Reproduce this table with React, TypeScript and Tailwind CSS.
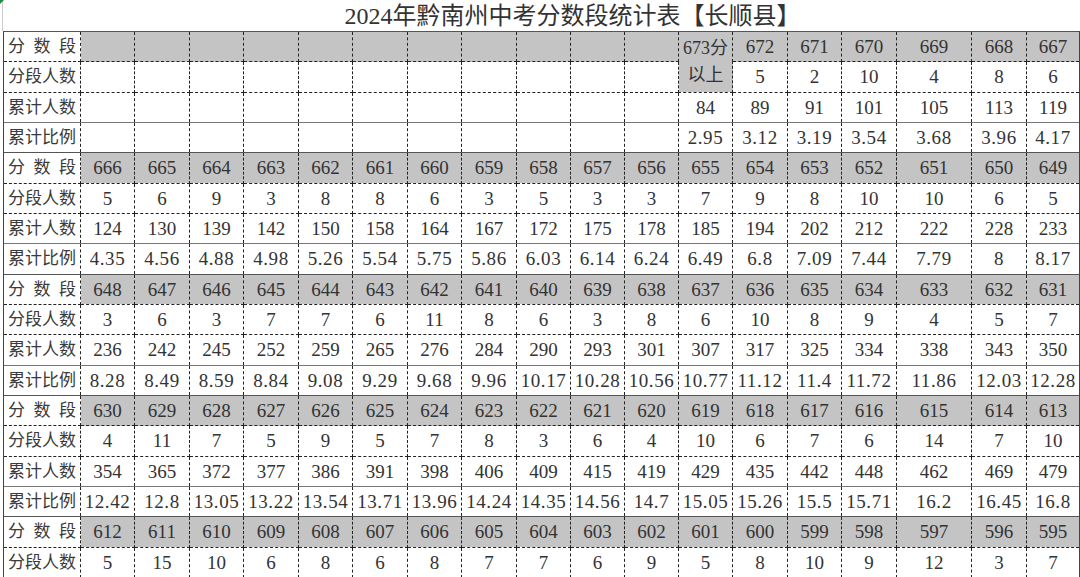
import React from 'react';

// one block = 分数段 / 分段人数 / 累计人数 / 累计比例
type Block = {
  scores: string[];
  counts: string[];
  totals?: string[];
  ratios?: string[];
};

const colWidths = [77, 54, 55, 54, 55, 54, 55, 54, 55, 54, 54, 54, 54, 55, 54, 55, 75, 55, 53];

const blocks: Block[] = [
  {
    scores: '666 665 664 663 662 661 660 659 658 657 656 655 654 653 652 651 650 649'.split(' '),
    counts: '5 6 9 3 8 8 6 3 5 3 3 7 9 8 10 10 6 5'.split(' '),
    totals: '124 130 139 142 150 158 164 167 172 175 178 185 194 202 212 222 228 233'.split(' '),
    ratios: '4.35 4.56 4.88 4.98 5.26 5.54 5.75 5.86 6.03 6.14 6.24 6.49 6.8 7.09 7.44 7.79 8 8.17'.split(' '),
  },
  {
    scores: '648 647 646 645 644 643 642 641 640 639 638 637 636 635 634 633 632 631'.split(' '),
    counts: '3 6 3 7 7 6 11 8 6 3 8 6 10 8 9 4 5 7'.split(' '),
    totals: '236 242 245 252 259 265 276 284 290 293 301 307 317 325 334 338 343 350'.split(' '),
    ratios: '8.28 8.49 8.59 8.84 9.08 9.29 9.68 9.96 10.17 10.28 10.56 10.77 11.12 11.4 11.72 11.86 12.03 12.28'.split(' '),
  },
  {
    scores: '630 629 628 627 626 625 624 623 622 621 620 619 618 617 616 615 614 613'.split(' '),
    counts: '4 11 7 5 9 5 7 8 3 6 4 10 6 7 6 14 7 10'.split(' '),
    totals: '354 365 372 377 386 391 398 406 409 415 419 429 435 442 448 462 469 479'.split(' '),
    ratios: '12.42 12.8 13.05 13.22 13.54 13.71 13.96 14.24 14.35 14.56 14.7 15.05 15.26 15.5 15.71 16.2 16.45 16.8'.split(' '),
  },
  {
    scores: '612 611 610 609 608 607 606 605 604 603 602 601 600 599 598 597 596 595'.split(' '),
    counts: '5 15 10 6 8 6 8 7 7 6 9 5 8 10 9 12 3 7'.split(' '),
  },
];

const empty11 = Array.from({ length: 11 }, () => '');

// border rules per row kind
const rowTop = {
  score: '[border-top-style:solid] border-t-[#555]',
  plain: '',
  ratio: '[border-top-style:solid] border-t-[#777] tracking-[0.6px]',
};

const cellBase = 'p-0 border border-dashed border-[#222] text-center align-middle';

function Label({ text, top }: { text: string; top: string }) {
  return (
    <td className={`${cellBase} ${top} tracking-normal bg-white [border-left-style:solid] border-l-[#444]`}>
      <div className="flex justify-between px-[4px] text-[17px] leading-none text-[#3a3a3a]">
        {text.split('').map((ch, i) => (
          <span key={i}>{ch}</span>
        ))}
      </div>
    </td>
  );
}

function Cells({ values, gray, top }: { values: string[]; gray?: boolean; top: string }) {
  return (
    <>
      {values.map((v, i) => (
        <td
          key={i}
          className={`${cellBase} ${top} ${gray ? 'bg-[#c4c4c4]' : 'bg-white'} ${
            i === values.length - 1 ? '[border-right-style:solid] border-r-[#444]' : ''
          }`}
        >
          {v}
        </td>
      ))}
    </>
  );
}

export default function App() {
  return (
    <div className="relative w-[1080px] h-[577px] overflow-hidden bg-white text-[#333] font-['Liberation_Serif','Noto_Sans_CJK_SC',serif]">
      {/* little green selection mark in the corner */}
      <div className="absolute left-0 top-0 w-0 h-0 border-t-[4px] border-r-[4px] border-t-[#1e8e3e] border-r-transparent" />

      <div className="ml-[2px] h-[31px] border-l border-[#ccc] flex items-center justify-center pl-[62px] text-[24px] leading-none">
        2024年黔南州中考分数段统计表【长顺县】
      </div>

      <table className="ml-[3px] table-fixed border-collapse text-[19px] leading-none">
        <colgroup>
          {colWidths.map((w, i) => (
            <col key={i} style={{ width: w }} />
          ))}
        </colgroup>
        <tbody>
          {/* first block: 673分以上 is merged over two rows */}
          <tr className="h-[30.33px]">
            <Label text="分数段" top={rowTop.score} />
            {empty11.map((_, i) => (
              <td key={i} className={`${cellBase} ${rowTop.score} bg-[#c4c4c4]`} />
            ))}
            <td rowSpan={2} className={`${cellBase} ${rowTop.score} bg-[#c4c4c4] text-[18px] leading-[27px]`}>
              673分
              <br />
              以上
            </td>
            <Cells values={['672', '671', '670', '669', '668', '667']} gray top={rowTop.score} />
          </tr>
          <tr className="h-[30.33px]">
            <Label text="分段人数" top={rowTop.plain} />
            {empty11.map((_, i) => (
              <td key={i} className={`${cellBase} bg-white`} />
            ))}
            <Cells values={['5', '2', '10', '4', '8', '6']} top={rowTop.plain} />
          </tr>
          <tr className="h-[30.33px]">
            <Label text="累计人数" top={rowTop.plain} />
            <Cells values={[...empty11, '84', '89', '91', '101', '105', '113', '119']} top={rowTop.plain} />
          </tr>
          <tr className="h-[30.33px]">
            <Label text="累计比例" top={rowTop.ratio} />
            <Cells
              values={[...empty11, '2.95', '3.12', '3.19', '3.54', '3.68', '3.96', '4.17']}
              top={rowTop.ratio}
            />
          </tr>

          {blocks.map((b, bi) => (
            <React.Fragment key={bi}>
              <tr className="h-[30.33px]">
                <Label text="分数段" top={rowTop.score} />
                <Cells values={b.scores} gray top={rowTop.score} />
              </tr>
              <tr className="h-[30.33px]">
                <Label text="分段人数" top={rowTop.plain} />
                <Cells values={b.counts} top={rowTop.plain} />
              </tr>
              {b.totals && (
                <tr className="h-[30.33px]">
                  <Label text="累计人数" top={rowTop.plain} />
                  <Cells values={b.totals} top={rowTop.plain} />
                </tr>
              )}
              {b.ratios && (
                <tr className="h-[30.33px]">
                  <Label text="累计比例" top={rowTop.ratio} />
                  <Cells values={b.ratios} top={rowTop.ratio} />
                </tr>
              )}
            </React.Fragment>
          ))}
        </tbody>
      </table>
    </div>
  );
}
